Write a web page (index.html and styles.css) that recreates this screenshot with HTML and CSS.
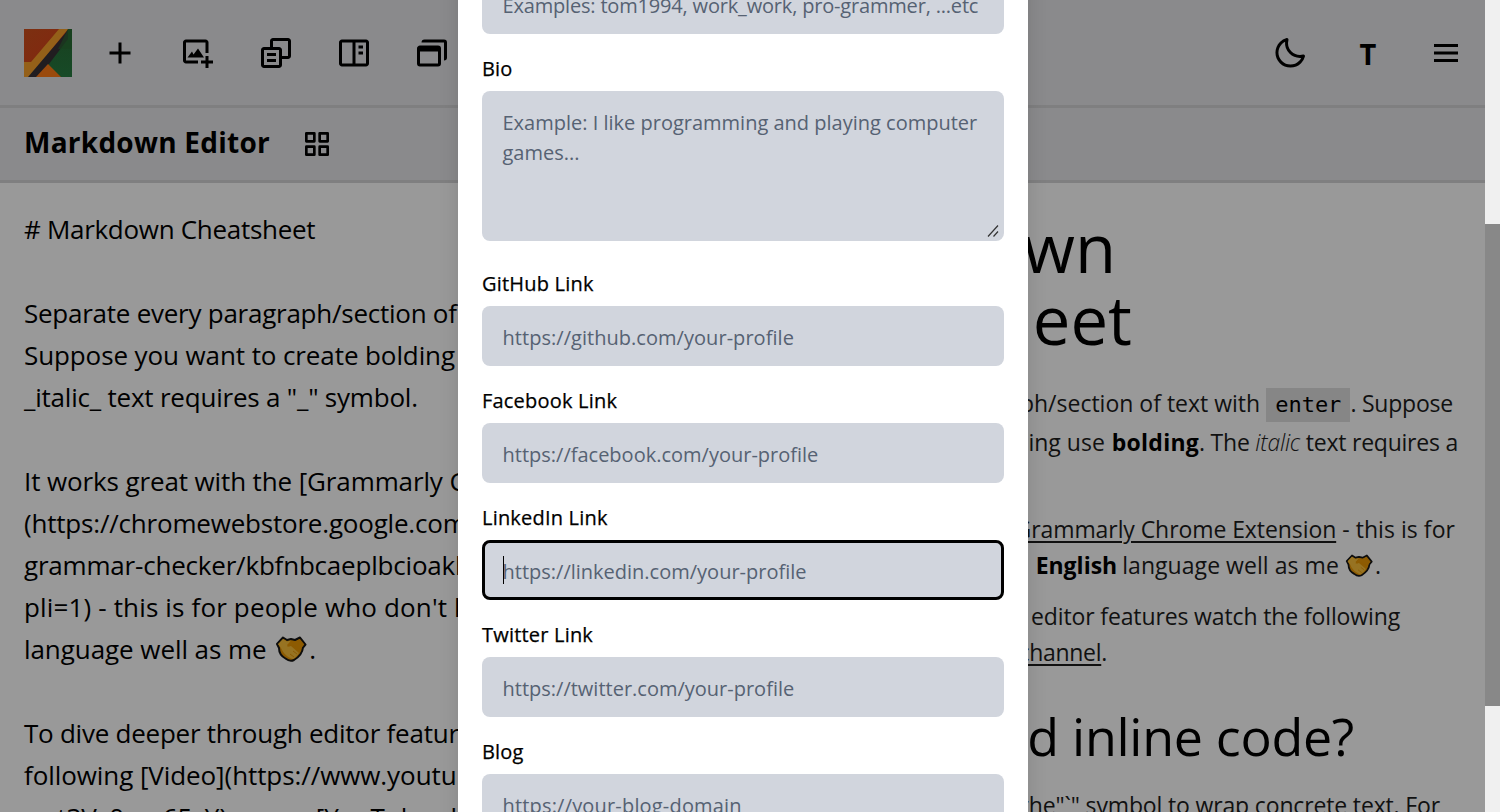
FILE: index.html
```html
<!DOCTYPE html>
<html lang="en">
<head>
<meta charset="utf-8">
<title>Markdown Editor</title>
<link rel="stylesheet" href="styles.css">
</head>
<body>
<svg class="defs" width="0" height="0">
  <symbol id="hands" viewBox="0 0 32 27">
    <path d="M2 8 8 1.5 12 4l4-1 4 1 5-2.500 5.500 7-2.500 3c-.5 5-4 9.500-9 12.500-3 1.500-6 .5-8.500-1.500C6 20 4 16 4 12z" fill="#8d5b02" stroke="#0d0d0d" stroke-width="2" stroke-linejoin="round"/>
    <path d="M3 8 8 3l4 2.500 4-1-4 6 4-.5 8 7c-2 3-4 5-6 6-5-1-10-6-12-11z" fill="#977322"/>
    <path d="m12 9 4-4 4 1 4-2.500 5 5-3.500 5-8-4-4 1z" fill="#8d5b02"/>
    <path d="m15 18 4 3m-1-6 4 3" stroke="#8d5b02" stroke-width="1"/>
  </symbol>
</svg>
<div class="app">
  <div class="page">
    <header class="topbar">
      <svg class="logo" viewBox="0 0 48 48">
        <defs>
          <linearGradient id="red" x2="1" y2="1"><stop stop-color="#7c3011"/><stop offset="1" stop-color="#85230f"/></linearGradient>
          <linearGradient id="green" x2="0" y2="1"><stop stop-color="#18401f"/><stop offset="1" stop-color="#174a27"/></linearGradient>
        </defs>
        <path fill="url(#red)" d="M0 0h48v48H0z"/>
        <path fill="url(#green)" d="M44 0h4v48H36L24 36z"/>
        <path fill="#946019" d="M35 0h9L7 46l-2 2H0V33h7z"/>
        <path fill="#211d20" d="M44 1v9L25 35 13 48H4z"/>
        <path fill="#18401f" d="M44 0h4v20H34z" opacity=".65"/>
        <path fill="#9a4a0d" d="m24 35 13 13H12z"/>
      </svg>
      <nav class="tools">
        <svg class="icon" viewBox="0 0 24 24"><path d="M19 11h-6V5h-2v6H5v2h6v6h2v-6h6z"/></svg>
        <svg class="icon" viewBox="0 0 24 24"><path d="M4 5h13v7h2V5c0-1.103-.897-2-2-2H4c-1.103 0-2 .897-2 2v12c0 1.103.897 2 2 2h8v-2H4V5z"/><path d="m8 11-3 4h11l-4-6-3 4z"/><path d="M19 14h-2v3h-3v2h3v3h2v-3h3v-2h-3z"/></svg>
        <svg class="icon" viewBox="0 0 24 24"><path d="M20 2H10c-1.103 0-2 .897-2 2v4H4c-1.103 0-2 .897-2 2v10c0 1.103.897 2 2 2h10c1.103 0 2-.897 2-2v-4h4c1.103 0 2-.897 2-2V4c0-1.103-.897-2-2-2zM4 20V10h10l.002 10H4zm16-6h-4v-4c0-1.103-.897-2-2-2h-4V4h10v10z"/><path d="M6 12h6v2H6zm0 4h6v2H6z"/></svg>
        <svg class="icon" viewBox="0 0 24 24"><path d="M20 3H4c-1.103 0-2 .897-2 2v14c0 1.103.897 2 2 2h16c1.103 0 2-.897 2-2V5c0-1.103-.897-2-2-2zM4 5h7v14H4zm9 14V5h7l.001 14z"/><path d="M15 7h3v2h-3zm0 4h3v2h-3z"/></svg>
        <svg class="icon" viewBox="0 0 24 24"><path d="M4 7h12a2 2 0 0 1 2 2v10a2 2 0 0 1-2 2H4a2 2 0 0 1-2-2V9c0-1.100.9-2 2-2zm0 12h12v-8H4z"/><path d="M5 5a2 2 0 0 1 2-2h13a2 2 0 0 1 2 2v10a2 2 0 0 1-2 2V5z"/></svg>
      </nav>
      <nav class="tools right">
        <svg class="icon" viewBox="0 0 24 24"><path d="M20.742 13.045a8.088 8.088 0 0 1-2.077.271c-2.135 0-4.140-.83-5.646-2.336a8.025 8.025 0 0 1-2.064-7.723A1 1 0 0 0 9.730 2.034a10.014 10.014 0 0 0-4.489 2.582c-3.898 3.898-3.898 10.243 0 14.143a9.937 9.937 0 0 0 7.072 2.930 9.930 9.930 0 0 0 7.070-2.929 10.007 10.007 0 0 0 2.583-4.491 1.001 1.001 0 0 0-1.224-1.224zm-2.772 4.301a7.947 7.947 0 0 1-5.656 2.343 7.953 7.953 0 0 1-5.658-2.344c-3.118-3.119-3.118-8.195 0-11.314a7.923 7.923 0 0 1 2.060-1.483 10.027 10.027 0 0 0 2.890 7.848 9.972 9.972 0 0 0 7.848 2.891 8.036 8.036 0 0 1-1.484 2.059z"/></svg>
        <b class="letter">T</b>
        <svg class="icon" viewBox="0 0 24 24"><path d="M4 6h16v2H4zm0 5h16v2H4zm0 5h16v2H4z"/></svg>
      </nav>
    </header>
    <div class="subbar">
      <h1 class="title">Markdown Editor</h1>
      <svg class="grid-icon" viewBox="0 0 24 24"><path fill-rule="evenodd" d="M10 3H4a1 1 0 0 0-1 1v6a1 1 0 0 0 1 1h6a1 1 0 0 0 1-1V4a1 1 0 0 0-1-1zM9 9H5V5h4zM20 3h-6a1 1 0 0 0-1 1v6a1 1 0 0 0 1 1h6a1 1 0 0 0 1-1V4a1 1 0 0 0-1-1zm-1 6h-4V5h4zM10 13H4a1 1 0 0 0-1 1v6a1 1 0 0 0 1 1h6a1 1 0 0 0 1-1v-6a1 1 0 0 0-1-1zm-1 6H5v-4h4zM20 13h-6a1 1 0 0 0-1 1v6a1 1 0 0 0 1 1h6a1 1 0 0 0 1-1v-6a1 1 0 0 0-1-1zm-1 6h-4v-4h4z"/></svg>
    </div>
    <main class="panes">
      <section class="source">
        <div class="row s1"># Markdown Cheatsheet</div>
        <div class="row"></div>
        <div class="row s2">Separate every paragraph/section of</div>
        <div class="row s3">Suppose you want to create bolding</div>
        <div class="row s4">_italic_ text requires a "_" symbol.</div>
        <div class="row"></div>
        <div class="row s5">It works great with the [Grammarly C</div>
        <div class="row s6">(https://chromewebstore.google.com</div>
        <div class="row s7">grammar-checker/kbfnbcaeplbcioakk</div>
        <div class="row s8">pli=1) - this is for people who don't k</div>
        <div class="row s9">language well as me <svg class="hands"><use href="#hands"/></svg>.</div>
        <div class="row"></div>
        <div class="row s10">To dive deeper through editor featur</div>
        <div class="row s11">following [Video](https://www.youtu</div>
        <div class="row s12">wyt3Vs0em65sY) or our [YouTube ch</div>
      </section>
      <section class="preview">
        <h2 class="big b1">Markdown</h2>
        <h2 class="big b2">Cheatsheet</h2>
        <div class="line p1">ph/section of text with <code class="code">enter</code><span class="p1-end">. Suppose</span></div>
        <div class="line p2">bolding use <b>bolding</b><span class="p2-end">. The <i>italic</i> text requires a</span></div>
        <div class="line p3"><u>Grammarly Chrome Extension</u><span class="p3-end"> - this is for</span></div>
        <div class="line p4"><b>English</b> language well as me <svg class="hands small"><use href="#hands"/></svg>.</div>
        <div class="line p5">editor features watch the following</div>
        <div class="line p6"><u>channel</u>.</div>
        <h3 class="medium">d inline code?</h3>
        <div class="line p7">the"`" symbol to wrap concrete text. For</div>
      </section>
    </main>
    <div class="modal">
      <div class="field"><label class="label">Nickname</label><div class="input"><span class="u1">Examples: tom1994, work_work, pro-grammer, ...etc</span></div></div>
      <div class="field bio"><label class="label">Bio</label><div class="input area"><span>Example: I like programming and playing computer</span><span>games...</span>
        <svg class="grip" viewBox="0 0 12 12"><path d="M1 11.500 11 .5M6.500 11.500 11 6.500" /></svg></div></div>
      <div class="field"><label class="label">GitHub Link</label><div class="input"><span class="u4">https://github.com/your-profile</span></div></div>
      <div class="field"><label class="label">Facebook Link</label><div class="input"><span>https://facebook.com/your-profile</span></div></div>
      <div class="field"><label class="label">LinkedIn Link</label><div class="input focus"><span>https://linkedin.com/your-profile</span></div></div>
      <div class="field"><label class="label">Twitter Link</label><div class="input"><span>https://twitter.com/your-profile</span></div></div>
      <div class="field"><label class="label">Blog</label><div class="input"><span class="u8">https://your-blog-domain</span></div></div>
    </div>
  </div>
  <div class="scrollbar"><div class="thumb"></div></div>
</div>
</body>
</html>
```
FILE: styles.css
```css
* { box-sizing: border-box; }
body { margin: 0; font-family: "Open Sans", "Noto Sans", sans-serif; color: #000; overflow: hidden; }
.defs { position: absolute; }
.app { display: flex; width: 1500px; height: 812px; overflow: hidden; }
.page { position: relative; width: 1485px; height: 812px; background: #999; overflow: hidden; }
.topbar { display: flex; align-items: center; height: 108px; padding: 1px 21px 0 24px; background: #8a8a8c; border-bottom: 3px solid #7f7f80; }
.logo { width: 48px; height: 48px; }
.tools { display: flex; align-items: center; gap: 42px; margin-left: 30px; }
.right { margin-left: auto; }
.icon { width: 36px; height: 36px; }
.letter { width: 36px; text-align: center; font-size: 29px; line-height: 36px; padding-top: 2px; }
.subbar { display: flex; align-items: center; height: 75px; padding-left: 24px; background: #8a8a8c; border-bottom: 3px solid #7f7f80; }
.title { margin: 0; width: 277px; font-size: 28px; line-height: 42px; padding-bottom: 4px; font-weight: 700; letter-spacing: .25px; white-space: nowrap; }
.grid-icon { width: 32px; height: 32px; }
.panes { display: flex; height: 629px; }
.source { width: 458px; padding: 25px 0 0 24px; }
.row { height: 42px; line-height: 42px; font-size: 26px; white-space: pre; }
.s1 { letter-spacing: -.3px; }
.s2, .s10 { letter-spacing: -.25px; }
.s3 { letter-spacing: -.1px; }
.s4 { letter-spacing: -.21px; }
.s5 { letter-spacing: -.12px; }
.s6, .s7 { letter-spacing: -.2px; }
.s8 { letter-spacing: .15px; }
.s9 { letter-spacing: -.07px; }
.s11 { letter-spacing: -.08px; }
.hands { width: 32px; height: 27px; vertical-align: -4px; margin: 0 2px; }
.small { width: 28px; height: 24px; margin: 0 2px 0 0; }
.preview { flex: 1; padding: 28px 0 0; overflow: hidden; }
.big { display: flex; justify-content: flex-end; margin: 0; height: 72px; line-height: 72px; font-size: 67px; font-weight: 400; }
.b1 { padding-right: 369px; }
.b2 { padding-right: 353px; }
.line { display: flow-root; text-align: right; height: 36px; line-height: 36px; font-size: 23px; white-space: pre; color: #111; }
.line b { color: #000; letter-spacing: .25px; }
.line i { font-weight: 300; }
.line u { text-decoration-thickness: 2px; text-underline-offset: 3px; }
.code { display: inline-block; height: 34px; line-height: 34px; padding: 0 9px; background: #868686; font-family: "DejaVu Sans Mono", monospace; font-size: 22px; color: #000; }
.p1 { margin-top: 30px; padding-right: 32px; }
.p1-end { letter-spacing: -.22px; }
.p2 { margin-top: 3px; padding-right: 27px; }
.p2 b { margin-left: 1px; }
.p2-end { letter-spacing: -.23px; }
.p3 { margin-top: 51px; padding-right: 30px; letter-spacing: -.08px; }
.p3-end { letter-spacing: .05px; }
.p4 { padding-right: 104px; letter-spacing: .05px; }
.p4 b { letter-spacing: 0; margin-right: -1px; }
.p5 { margin-top: 15px; padding-right: 85px; letter-spacing: -.13px; }
.p6 { padding-right: 378px; letter-spacing: -.3px; }
.medium { margin: 30px 0 0; padding-right: 131px; text-align: right; height: 72px; line-height: 72px; font-size: 52px; letter-spacing: -.3px; font-weight: 400; }
.p7 { margin-top: 15px; padding-right: 45px; letter-spacing: -.15px; }
.modal { position: absolute; left: 458px; top: -83px; width: 570px; height: 920px; padding: 22px 24px 0; background: #fff; box-shadow: 0 0 18px rgba(0,0,0,.13); display: flex; flex-direction: column; gap: 22px; }
.field { display: flex; flex-direction: column; gap: 10px; }
.bio { margin-bottom: 8px; }
.label { height: 25px; line-height: 25px; font-size: 20px; font-weight: 500; letter-spacing: .2px; -webkit-text-stroke: .25px #000; }
.input { position: relative; height: 60px; padding: 17px 20px 13px 20.5px; border-radius: 8px; background: #d1d5dd; color: #566273; font-size: 20px; line-height: 30px; white-space: nowrap; display: flex; flex-direction: column; align-items: flex-start; }
.u1 { letter-spacing: -.18px; }
.u4 { letter-spacing: .04px; }
.u8 { letter-spacing: .18px; }
.area { height: 150px; }
.focus { border: 3px solid #000; padding: 14px 17px 10px 17.5px; }
.focus::before { content: ""; position: absolute; left: 18px; top: 13px; width: 1px; height: 28px; background: #000; }
.grip { position: absolute; right: 5px; bottom: 4px; width: 12px; height: 12px; fill: none; stroke: #333; stroke-width: 1.2; }
.scrollbar { width: 15px; height: 812px; padding-top: 224px; background: #f0f0f0; }
.thumb { height: 482px; background: #888; }
```
